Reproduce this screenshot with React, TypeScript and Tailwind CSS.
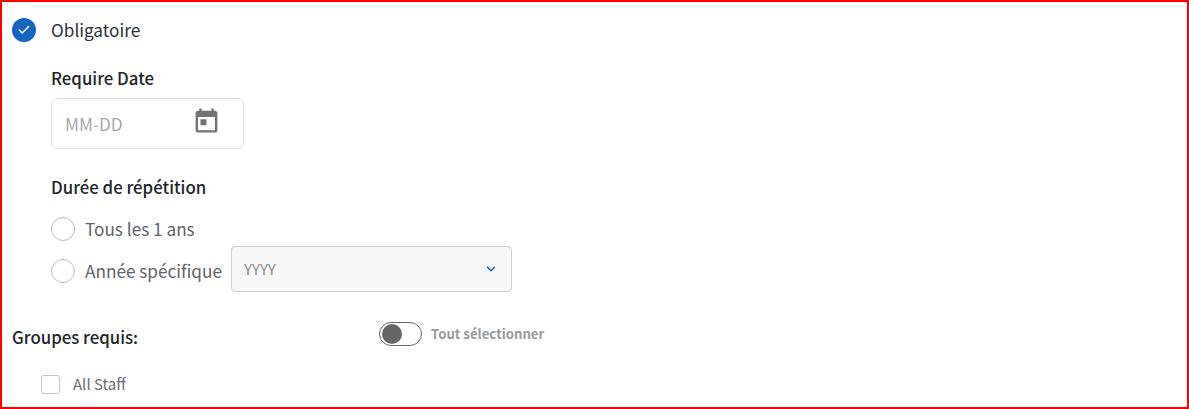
import { Check, ChevronDown } from 'lucide-react';

const font = "font-['Noto_Sans_CJK_SC','Noto_Sans',sans-serif]";

function CalendarIcon() {
  return (
    <svg viewBox="0 0 24 24" className="w-[29px] h-[29px] mb-[6px] fill-[#737373]">
      <path d="M19 4h-1V2h-2v2H8V2H6v2H5c-1.11 0-1.99.9-1.99 2L3 20a2 2 0 0 0 2 2h14c1.1 0 2-.9 2-2V6c0-1.1-.9-2-2-2zm0 16H5V9h14v11zM7 11h5v5H7z" />
    </svg>
  );
}

function Radio({ label }: { label: string }) {
  return (
    <label className="flex items-center gap-[10px]">
      <span className="w-[24px] h-[24px] rounded-full border border-[#bdbdbd] bg-white shrink-0" />
      <span className="text-[17.2px] leading-[24px] text-[#5f6368]">{label}</span>
    </label>
  );
}

export default function App() {
  return (
    <div className={`${font} w-[1189px] h-[409px] overflow-hidden border-2 border-[#ff0000] bg-white pl-[10px] pt-[16px]`}>
      {/* Obligatoire */}
      <div className="flex items-center gap-[15px] h-[24px]">
        <span className="w-[24px] h-[24px] rounded-full bg-[#1565c0] flex items-center justify-center text-white">
          <Check className="w-[14px] h-[14px]" strokeWidth={2.5} />
        </span>
        <span className="text-[17.2px] leading-[24px] text-[#2b3038]">Obligatoire</span>
      </div>

      <div className="pl-[39px]">
        <h3 className="mt-[24px] text-[16.8px] leading-[24px] font-medium text-[#212529]">Require Date</h3>
        <div className="mt-[8px] w-[193px] h-[51px] rounded-[6px] border border-[#e0e0e0] flex items-center justify-between pl-[13px] pr-[22px]">
          <span className="text-[17.2px] leading-[24px] text-[#a9a9a9]">MM-DD</span>
          <CalendarIcon />
        </div>

        <h3 className="mt-[26px] text-[16.8px] leading-[24px] font-medium text-[#212529]">Durée de répétition</h3>
        <div className="mt-[18px]">
          <Radio label="Tous les 1 ans" />
        </div>
        <div className="mt-[5px] flex items-start gap-[9px]">
          <div className="mt-[13px]">
            <Radio label="Année spécifique" />
          </div>
          <div className="w-[281px] h-[46px] rounded-[4px] border border-[#cfcfcf] bg-[#f8f8f8] flex items-center justify-between pl-[12px] pr-[13px]">
            <span className="text-[15px] leading-[20px] text-[#8a8a8a]">YYYY</span>
            <ChevronDown className="w-[14px] h-[14px] text-[#1558b0]" strokeWidth={2.5} />
          </div>
        </div>
      </div>

      {/* Groupes requis */}
      <div className="mt-[30px] flex items-start">
        <h3 className="mt-[3px] w-[367px] text-[16.8px] leading-[24px] font-medium text-[#212529]">Groupes requis:</h3>
        <div className="flex items-center gap-[9px]">
          <span className="w-[43px] h-[24px] rounded-full border border-[#666666] bg-white flex items-center pl-[2px]">
            <span className="w-[20px] h-[20px] rounded-full bg-[#666666]" />
          </span>
          <span className="text-[13.2px] leading-[24px] font-bold text-[#9a9a9a]">Tout sélectionner</span>
        </div>
      </div>
      <label className="mt-[25px] ml-[29px] flex items-center gap-[13px]">
        <span className="w-[19px] h-[19px] rounded-[3px] border border-[#c4c4c4] bg-white" />
        <span className="text-[15px] leading-[20px] text-[#6b6f75]">All Staff</span>
      </label>
    </div>
  );
}
